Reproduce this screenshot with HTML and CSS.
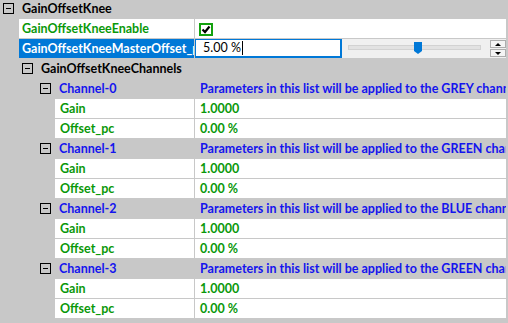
FILE: index.html
```html
<!DOCTYPE html>
<html lang="en">
<head>
<meta charset="UTF-8">
<title>GainOffsetKnee</title>
<link rel="stylesheet" href="styles.css">
</head>
<body>
<div class="tree">
  <div class="row group lvl0">
    <div class="key"><span class="toggle"></span><span class="label">GainOffsetKnee</span></div>
  </div>
  <div class="row prop lvl1">
    <div class="name green">GainOffsetKneeEnable</div>
    <div class="value">
      <span class="check">
        <svg width="10" height="9" viewBox="0 0 10 9"><polyline points="1.5,4.5 4,7 8.5,1.5" fill="none" stroke="#000" stroke-width="2.2"/></svg>
      </span>
    </div>
  </div>
  <div class="row prop lvl1 selected">
    <div class="name">GainOffsetKneeMasterOffset_pc</div>
    <div class="value editor">
      <div class="textbox">5.00 %<span class="caret"></span></div>
      <div class="slider"><div class="track"></div><div class="thumb"></div></div>
      <div class="spin">
        <div class="spin-btn"><span class="arrow up"></span></div>
        <div class="spin-btn"><span class="arrow down"></span></div>
      </div>
    </div>
  </div>
  <div class="row group lvl1">
    <div class="key"><span class="toggle"></span><span class="label">GainOffsetKneeChannels</span></div>
  </div>

  <div class="row group lvl2">
    <div class="key"><span class="toggle"></span><span class="label blue">Channel-0</span></div>
    <div class="desc blue">Parameters in this list will be applied to the GREY channel</div>
  </div>
  <div class="row prop lvl3"><div class="name green">Gain</div><div class="value green">1.0000</div></div>
  <div class="row prop lvl3"><div class="name green">Offset_pc</div><div class="value green">0.00 %</div></div>

  <div class="row group lvl2">
    <div class="key"><span class="toggle"></span><span class="label blue">Channel-1</span></div>
    <div class="desc blue">Parameters in this list will be applied to the GREEN channel</div>
  </div>
  <div class="row prop lvl3"><div class="name green">Gain</div><div class="value green">1.0000</div></div>
  <div class="row prop lvl3"><div class="name green">Offset_pc</div><div class="value green">0.00 %</div></div>

  <div class="row group lvl2">
    <div class="key"><span class="toggle"></span><span class="label blue">Channel-2</span></div>
    <div class="desc blue">Parameters in this list will be applied to the BLUE channel</div>
  </div>
  <div class="row prop lvl3"><div class="name green">Gain</div><div class="value green">1.0000</div></div>
  <div class="row prop lvl3"><div class="name green">Offset_pc</div><div class="value green">0.00 %</div></div>

  <div class="row group lvl2">
    <div class="key"><span class="toggle"></span><span class="label blue">Channel-3</span></div>
    <div class="desc blue">Parameters in this list will be applied to the GREEN channel</div>
  </div>
  <div class="row prop lvl3"><div class="name green">Gain</div><div class="value green">1.0000</div></div>
  <div class="row prop lvl3"><div class="name green">Offset_pc</div><div class="value green">0.00 %</div></div>
</div>
</body>
</html>
```

FILE: styles.css
```css
/* Property grid */
body {
  margin: 0;
  background-color: #c8c8c8;
  font-family: 'Lato', 'Open Sans', sans-serif;
  font-size: 12.5px;
  font-weight: bold;
  color: #000;
  overflow: hidden;
}
.tree {
  width: 506px;
  margin-top: -2px;
}
.row {
  height: 20px;
  box-sizing: border-box;
  white-space: nowrap;
  overflow: hidden;
}
.green { color: #0a980a; }
.blue { color: #1414ee; }

/* group rows (expandable) */
.group {
  display: flex;
  align-items: center;
}
.group .key {
  width: 195px;
  flex: none;
  box-sizing: border-box;
  display: flex;
  align-items: center;
}
.lvl0 .key { padding-left: 3px; }
.lvl1 .key { padding-left: 22px; }
.lvl2 .key { padding-left: 40px; }
.toggle {
  width: 9px;
  height: 9px;
  border: 1px solid #000;
  position: relative;
  flex: none;
  margin-right: 8px;
}
.toggle::after {
  content: "";
  position: absolute;
  left: 2px;
  right: 2px;
  top: 4px;
  height: 1px;
  background: #000;
}
.desc {
  padding-left: 5px;
  overflow: hidden;
}

/* property rows */
.prop {
  display: flex;
  padding-top: 1px;
}
.name, .value {
  background: #fff;
  height: 19px;
  line-height: 19px;
  overflow: hidden;
}
.name {
  flex: none;
  padding-left: 3px;
  box-sizing: border-box;
}
.lvl1 .name { margin-left: 19px; width: 175px; }
.lvl3 .name { margin-left: 55px; width: 139px; padding-left: 5px; }
.value {
  flex: 1;
  margin-left: 1px;
  padding-left: 5px;
}
.selected .name {
  background: #0078d7;
  color: #fff;
}

/* checkbox */
.check {
  display: inline-block;
  width: 10px;
  height: 9px;
  border: 2px solid #13a10e;
  margin-top: 4px;
  margin-left: -1px;
  vertical-align: top;
  line-height: 0;
}

/* editor in the selected row */
.editor {
  display: flex;
  padding-left: 0;
  background: #f0f0f0;
}
.textbox {
  width: 147px;
  flex: none;
  box-sizing: border-box;
  border: 1px solid #0078d7;
  border-bottom-width: 2px;
  border-right-width: 2px;
  background: #fff;
  padding-left: 7px;
  font-family: 'Lato', sans-serif;
  font-weight: normal;
  font-size: 12.5px;
  line-height: 16px;
}
.caret {
  display: inline-block;
  width: 1px;
  height: 14px;
  background: #000;
  margin-left: 1px;
  vertical-align: -3px;
}
.slider {
  width: 148px;
  flex: none;
  position: relative;
}
.track {
  position: absolute;
  left: 6px;
  right: 9px;
  top: 6px;
  height: 3px;
  background: #e2e2e2;
  border: 1px solid #d2d2d2;
}
.thumb {
  position: absolute;
  left: 72px;
  top: 3px;
  width: 8px;
  height: 9px;
  background: #0078d7;
}
.thumb::after {
  content: "";
  position: absolute;
  left: 0;
  top: 9px;
  border-left: 4px solid transparent;
  border-right: 4px solid transparent;
  border-top: 3px solid #0078d7;
}
.spin {
  width: 16px;
  flex: none;
  display: flex;
  flex-direction: column;
  gap: 1px;
  padding-top: 1px;
}
.spin-btn {
  height: 8px;
  border: 1px solid #adadad;
  background: #f4f4f4;
  display: flex;
  justify-content: center;
  align-items: center;
  box-sizing: border-box;
}
.arrow {
  width: 0;
  height: 0;
  border-left: 3px solid transparent;
  border-right: 3px solid transparent;
}
.arrow.up { border-bottom: 3px solid #000; }
.arrow.down { border-top: 3px solid #000; }
```
